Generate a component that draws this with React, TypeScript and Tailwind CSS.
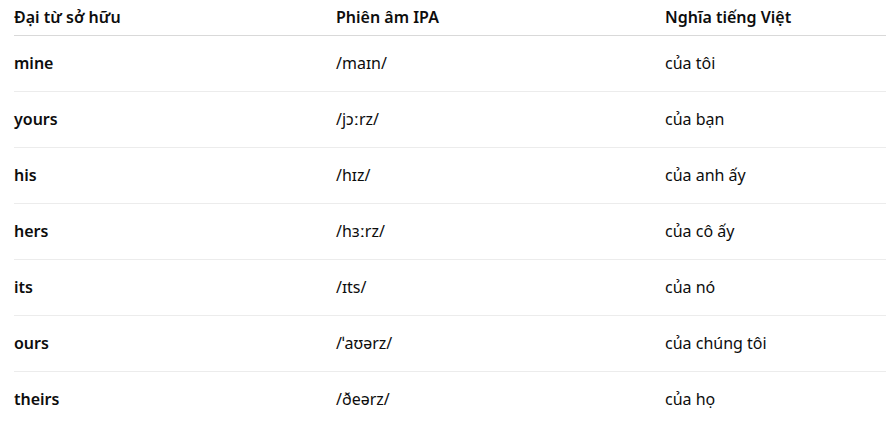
const rows = [
  { pronoun: 'mine', ipa: '/maɪn/', meaning: 'của tôi' },
  { pronoun: 'yours', ipa: '/jɔːrz/', meaning: 'của bạn' },
  { pronoun: 'his', ipa: '/hɪz/', meaning: 'của anh ấy' },
  { pronoun: 'hers', ipa: '/hɜːrz/', meaning: 'của cô ấy' },
  { pronoun: 'its', ipa: '/ɪts/', meaning: 'của nó' },
  { pronoun: 'ours', ipa: '/ˈaʊərz/', meaning: 'của chúng tôi' },
  { pronoun: 'theirs', ipa: '/ðeərz/', meaning: 'của họ' },
]

export default function App() {
  return (
    <div className="min-h-screen bg-white pl-[14px] text-[#0d0d0d] font-['Noto_Sans',sans-serif] text-[16px]">
      <table className="w-[872px] table-fixed border-collapse text-left">
        <colgroup>
          <col className="w-[322px]" />
          <col className="w-[329px]" />
          <col />
        </colgroup>
        <thead>
          <tr className="h-[35px] border-b border-[#d9d9d9]">
            <th className="font-semibold align-middle pb-[1px]">Đại từ sở hữu</th>
            <th className="font-semibold align-middle pb-[1px]">Phiên âm IPA</th>
            <th className="font-semibold align-middle pb-[1px]">Nghĩa tiếng Việt</th>
          </tr>
        </thead>
        <tbody>
          {rows.map((row, i) => (
            <tr
              key={row.pronoun}
              className={`h-[56px] ${i < rows.length - 1 ? 'border-b border-[#ececec]' : ''}`}
            >
              <td className="font-semibold align-middle">{row.pronoun}</td>
              <td className="align-middle">{row.ipa}</td>
              <td className="align-middle">{row.meaning}</td>
            </tr>
          ))}
        </tbody>
      </table>
    </div>
  )
}
